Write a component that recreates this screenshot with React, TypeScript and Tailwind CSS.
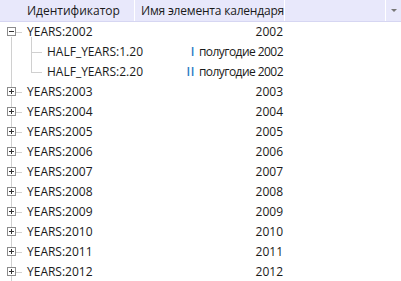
import React from "react";

type Row = { id: string; name: string; roman?: string; child?: boolean; expanded?: boolean; lastChild?: boolean };

const rows: Row[] = [
  { id: "YEARS:2002", name: "2002", expanded: true },
  { id: "HALF_YEARS:1.20", name: "полугодие 2002", roman: "I", child: true },
  { id: "HALF_YEARS:2.20", name: "полугодие 2002", roman: "II", child: true, lastChild: true },
  ...["2003", "2004", "2005", "2006", "2007", "2008", "2009", "2010", "2011", "2012"].map((y) => ({ id: "YEARS:" + y, name: y })),
];

function Box({ expanded }: { expanded?: boolean }) {
  return (
    <div className="w-[9px] h-[9px] border border-[#8c8c8c] bg-white relative">
      <div className="absolute left-[1px] top-[3px] w-[5px] h-[1px] bg-[#333]" />
      {!expanded && <div className="absolute left-[3px] top-[1px] w-[1px] h-[5px] bg-[#333]" />}
    </div>
  );
}

export default function App() {
  return (
    <div className="w-[401px] h-[281px] bg-white overflow-hidden text-[12px] text-[#1a1a1a] whitespace-nowrap" style={{ fontFamily: "'Open Sans', 'Liberation Sans', sans-serif" }}>
      <div className="flex h-[22px] bg-[#e8e8fb] border-b border-[#d6d6f2]">
        <div className="w-[135px] pl-[27px] flex items-center border-r border-white">Идентификатор</div>
        <div className="w-[150px] pl-[6px] flex items-center border-r border-white tracking-[-0.2px]">Имя элемента календаря</div>
        <div className="w-[101px] border-r border-white" />
        <div className="flex-1 flex items-center justify-center">
          <div className="w-0 h-0 border-l-[3px] border-r-[3px] border-t-[3px] border-l-transparent border-r-transparent border-t-[#777]" />
        </div>
      </div>
      <div className="relative">
        <div className="absolute left-[11px] top-[15px] h-[250px] w-px bg-[#d0d0d0]" />
        {rows.map((r, i) => (
          <div key={i} className="flex h-[20px] items-center relative">
            <div className="w-[135px] flex items-center h-full relative">
              {r.child ? (
                <>
                  <div className={"absolute left-[31px] top-0 w-px bg-[#d0d0d0] " + (r.lastChild ? "h-[10px]" : "h-[20px]")} />
                  <div className="absolute left-[31px] top-[10px] w-[11px] h-px bg-[#d0d0d0]" />
                  <span className="pl-[47px]">{r.id}</span>
                </>
              ) : (
                <>
                  <div className="absolute left-[7px] top-[5px]"><Box expanded={r.expanded} /></div>
                  <div className="absolute left-[16px] top-[10px] w-[6px] h-px bg-[#d0d0d0]" />
                  {r.expanded && <div className="absolute left-[31px] top-[15px] w-px h-[5px] bg-[#d0d0d0]" />}
                  <span className="pl-[27px]">{r.id}</span>
                </>
              )}
            </div>
            <div className="w-[148px] flex justify-end items-center">
              {r.roman && <span className="text-[#2b7bc4] mr-[4px] font-semibold tracking-[0.5px]">{r.roman}</span>}
              <span className={r.roman ? "tracking-[-0.55px]" : ""}>{r.name}</span>
            </div>
          </div>
        ))}
      </div>
    </div>
  );
}
